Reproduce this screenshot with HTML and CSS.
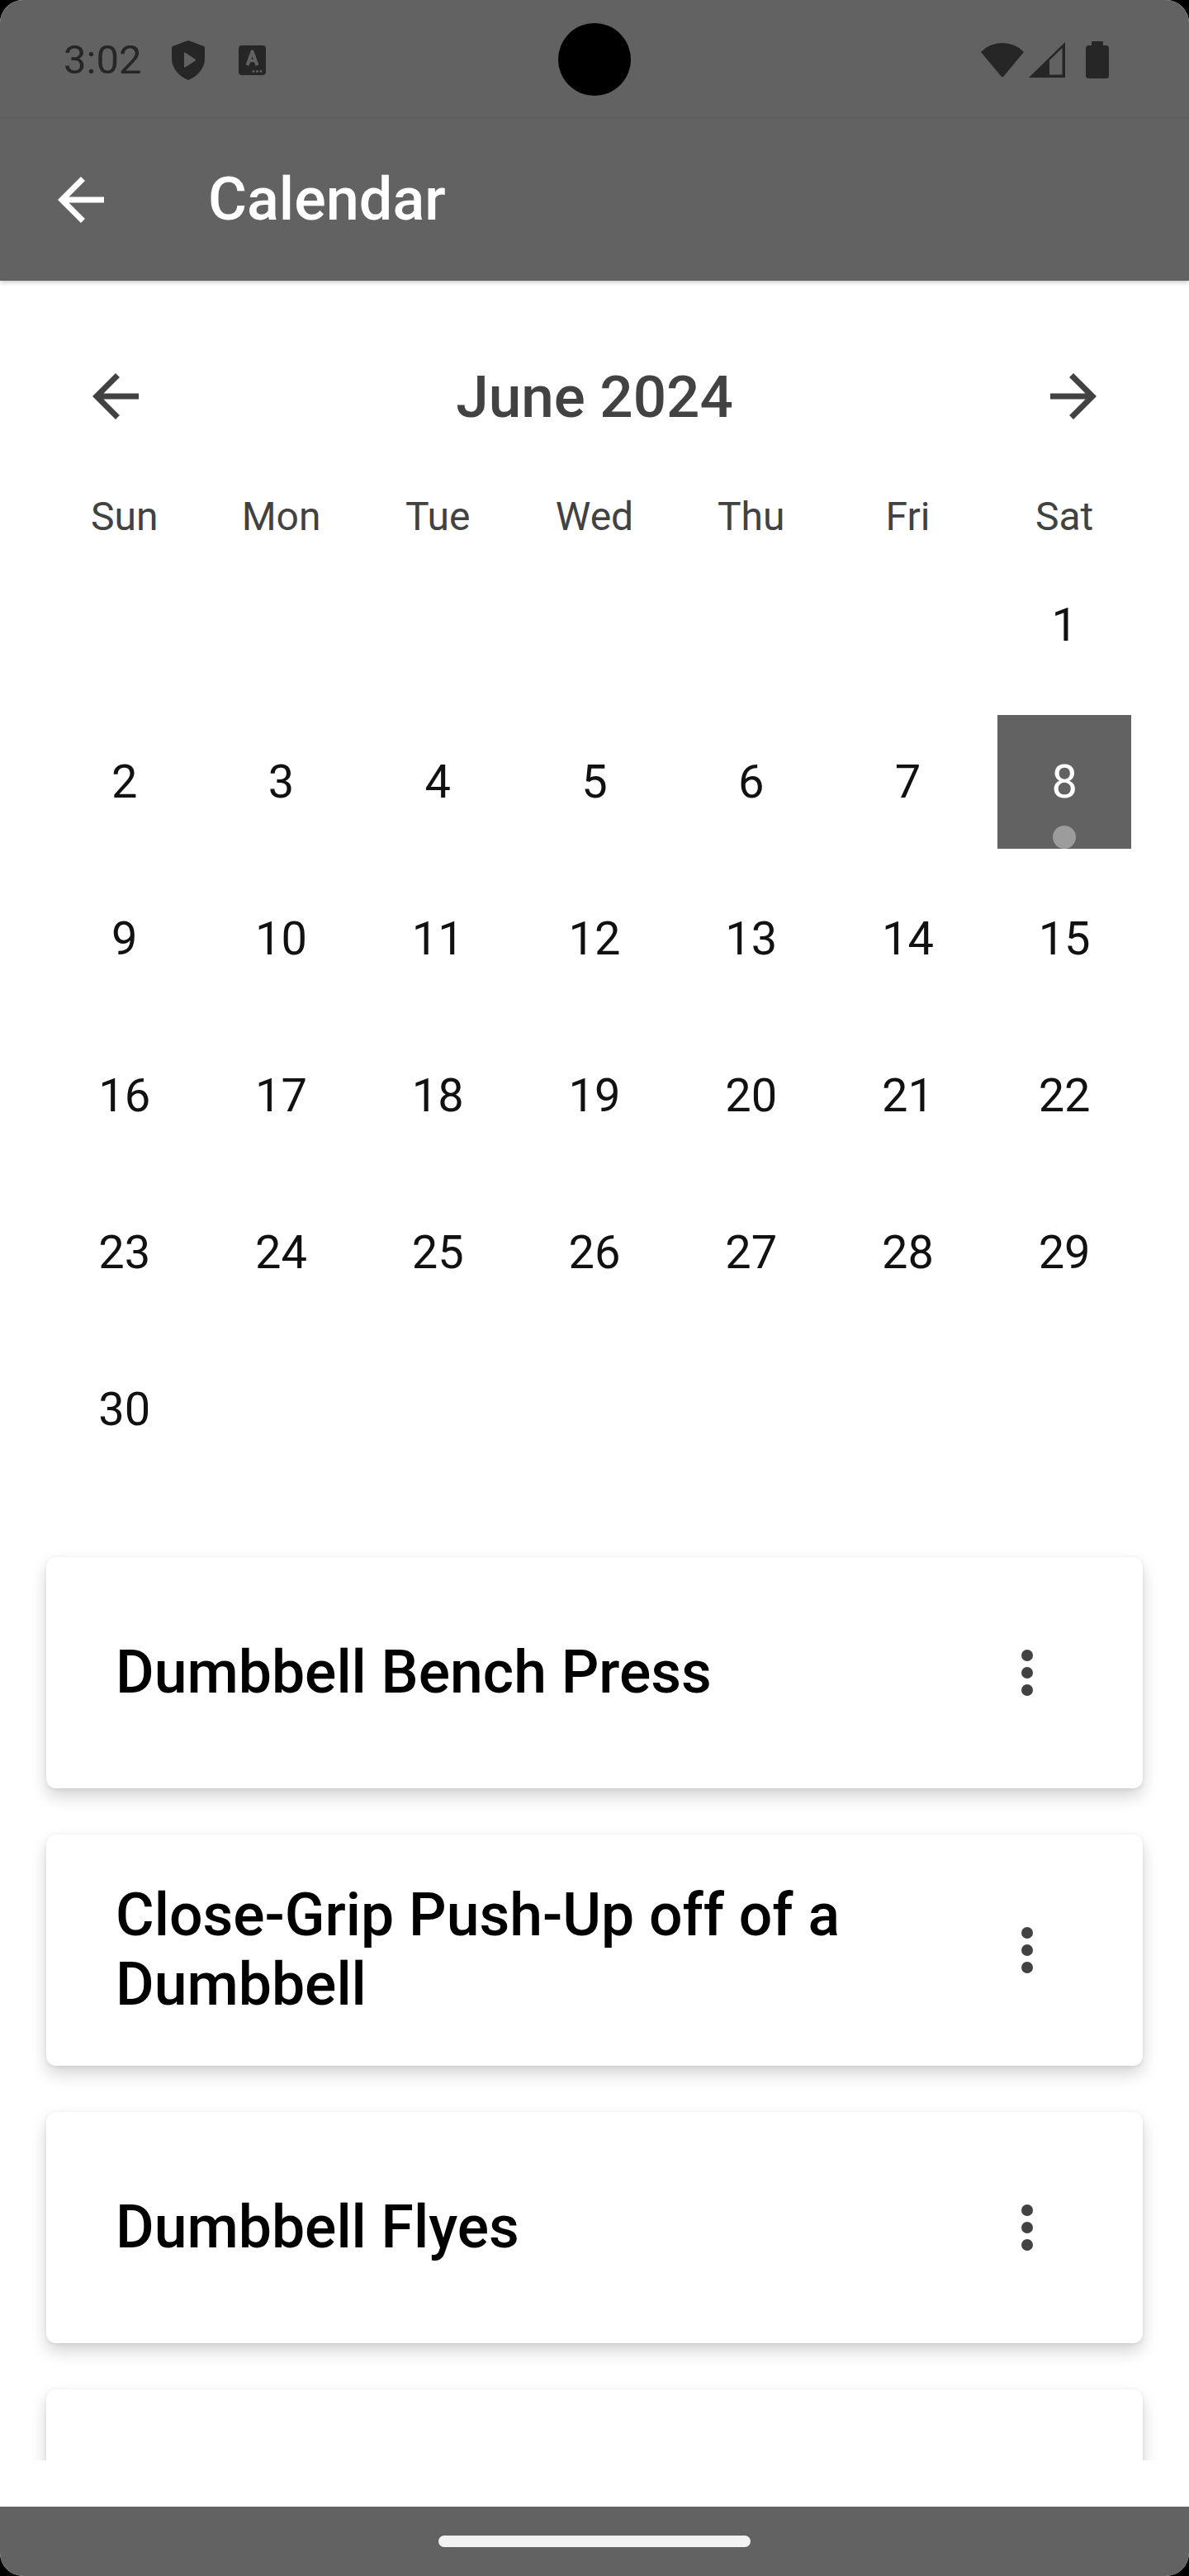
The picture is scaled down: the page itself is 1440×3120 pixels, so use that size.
FILE: index.html
```html
<!DOCTYPE html>
<html lang="en">
<head>
<meta charset="utf-8">
<title>Calendar</title>
<link rel="stylesheet" href="styles.css">
</head>
<body>
<div class="screen">
  <header class="status">
    <span class="time">3:02</span>
    <svg class="shield" viewBox="0 0 40 48"><path d="M20 0 L39 7 Q40 7.4 40 8.5 V22 C40 34 31 43.5 20 48 C9 43.5 0 34 0 22 V8.5 Q0 7.4 1 7 Z" fill="#262626"/><path d="M15 15.5 Q15 14 16.3 14.8 L28.5 22.8 Q29.6 23.6 28.5 24.4 L16.3 32.4 Q15 33.2 15 31.7 Z" fill="#626262"/></svg>
    <svg class="a-icon" viewBox="0 0 33 36"><rect x="0" y="0" width="33" height="36" rx="4" fill="#262626"/><polyline points="10.5,24 16.5,7.5 22.5,24" fill="none" stroke="#626262" stroke-width="4" stroke-linejoin="round"/><line x1="12.5" y1="18.5" x2="20.5" y2="18.5" stroke="#626262" stroke-width="3.5"/><circle cx="18" cy="31.5" r="1.4" fill="#626262"/><circle cx="22.5" cy="31.5" r="1.4" fill="#626262"/><circle cx="27" cy="31.5" r="1.4" fill="#626262"/></svg>
    <span class="spacer"></span>
    <svg class="wifi" viewBox="0 0 54 44"><path d="M1 13 A36 36 0 0 1 53 13 L28.5 42.5 Q27 44 25.5 42.5 Z" fill="#262626"/></svg>
    <svg class="signal" viewBox="0 0 44 43"><path d="M44 0 V43 H0 Z" fill="#262626"/><path d="M25 22 L40.5 7 V39.5 H25 Z" fill="#626262"/></svg>
    <svg class="battery" viewBox="0 0 28 45"><rect x="7" y="0" width="14" height="7" rx="1" fill="#262626"/><rect x="0" y="5" width="28" height="40" rx="3.5" fill="#262626"/></svg>
    <span class="camera"></span>
  </header>

  <div class="appbar">
    <svg class="back" viewBox="0 0 24 24"><path d="M20 11H7.83l5.59-5.59L12 4l-8 8 8 8 1.41-1.41L7.83 13H20v-2z"/></svg>
    <h1 class="appbar-title">Calendar</h1>
  </div>

  <main class="content">
    <section class="calendar">
      <div class="cal-header">
        <svg class="nav-arrow" viewBox="0 0 24 24"><path d="M20 11H7.83l5.59-5.59L12 4l-8 8 8 8 1.41-1.41L7.83 13H20v-2z"/></svg>
        <h2 class="month">June 2024</h2>
        <svg class="nav-arrow" viewBox="0 0 24 24"><path d="M4 11h12.17l-5.59-5.59L12 4l8 8-8 8-1.41-1.41L16.17 13H4v-2z"/></svg>
      </div>
      <div class="weekdays">
        <span>Sun</span><span>Mon</span><span>Tue</span><span>Wed</span><span>Thu</span><span>Fri</span><span>Sat</span>
      </div>
      <div class="days">
        <div class="day first"><span class="num">1</span></div>
        <div class="day"><span class="num">2</span></div>
        <div class="day"><span class="num">3</span></div>
        <div class="day"><span class="num">4</span></div>
        <div class="day"><span class="num">5</span></div>
        <div class="day"><span class="num">6</span></div>
        <div class="day"><span class="num">7</span></div>
        <div class="day"><span class="num selected">8<span class="dot"></span></span></div>
        <div class="day"><span class="num">9</span></div>
        <div class="day"><span class="num">10</span></div>
        <div class="day"><span class="num">11</span></div>
        <div class="day"><span class="num">12</span></div>
        <div class="day"><span class="num">13</span></div>
        <div class="day"><span class="num">14</span></div>
        <div class="day"><span class="num">15</span></div>
        <div class="day"><span class="num">16</span></div>
        <div class="day"><span class="num">17</span></div>
        <div class="day"><span class="num">18</span></div>
        <div class="day"><span class="num">19</span></div>
        <div class="day"><span class="num">20</span></div>
        <div class="day"><span class="num">21</span></div>
        <div class="day"><span class="num">22</span></div>
        <div class="day"><span class="num">23</span></div>
        <div class="day"><span class="num">24</span></div>
        <div class="day"><span class="num">25</span></div>
        <div class="day"><span class="num">26</span></div>
        <div class="day"><span class="num">27</span></div>
        <div class="day"><span class="num">28</span></div>
        <div class="day"><span class="num">29</span></div>
        <div class="day"><span class="num">30</span></div>
      </div>
    </section>

    <section class="list">
      <article class="card">
        <h3 class="card-title">Dumbbell Bench Press</h3>
        <span class="more"><svg viewBox="0 0 24 24"><circle cx="12" cy="6" r="2"/><circle cx="12" cy="12" r="2"/><circle cx="12" cy="18" r="2"/></svg></span>
      </article>
      <article class="card">
        <h3 class="card-title">Close-Grip Push-Up off of a Dumbbell</h3>
        <span class="more"><svg viewBox="0 0 24 24"><circle cx="12" cy="6" r="2"/><circle cx="12" cy="12" r="2"/><circle cx="12" cy="18" r="2"/></svg></span>
      </article>
      <article class="card">
        <h3 class="card-title">Dumbbell Flyes</h3>
        <span class="more"><svg viewBox="0 0 24 24"><circle cx="12" cy="6" r="2"/><circle cx="12" cy="12" r="2"/><circle cx="12" cy="18" r="2"/></svg></span>
      </article>
      <article class="card"></article>
    </section>
  </main>

  <div class="gesture-space"></div>
  <nav class="navbar"><span class="handle"></span></nav>
</div>
</body>
</html>
```

FILE: styles.css
```css
html, body {
  margin: 0;
  padding: 0;
  background: #000;
}

.screen {
  width: 1440px;
  height: 3120px;
  border-radius: 28px;
  overflow: hidden;
  background: #fff;
  display: flex;
  flex-direction: column;
  font-family: Roboto, "Noto Sans", "Liberation Sans", sans-serif;
  position: relative;
}

/* Status bar */
.status {
  flex: 0 0 144px;
  height: 144px;
  box-sizing: border-box;
  background: #626262;
  display: flex;
  align-items: center;
  padding: 0 97px 0 77px;
  position: relative;
}

.time {
  font-size: 49px;
  line-height: 1;
  color: #262626;
  margin-right: 37px;
}

.shield {
  width: 40px;
  height: 48px;
  margin-right: 41px;
  margin-top: 2px;
}

.a-icon {
  width: 33px;
  height: 36px;
  margin-top: 2px;
}

.spacer {
  flex: 1;
}

.wifi {
  width: 54px;
  height: 44px;
  margin-right: 5px;
}

.signal {
  width: 44px;
  height: 43px;
  margin-right: 25px;
}

.battery {
  width: 28px;
  height: 45px;
}

.camera {
  position: absolute;
  left: 676px;
  top: 28px;
  width: 88px;
  height: 88px;
  border-radius: 50%;
  background: #000;
}

/* App bar */
.appbar {
  flex: 0 0 196px;
  height: 196px;
  box-sizing: border-box;
  background: #626262;
  display: flex;
  align-items: center;
  padding-left: 56px;
  box-shadow: 0 2px 5px rgba(0, 0, 0, 0.22);
  position: relative;
  z-index: 1;
}

.back {
  width: 84px;
  height: 84px;
  fill: #fff;
  flex: none;
}

.appbar-title {
  margin: 0 0 0 112px;
  font-size: 72px;
  font-weight: 500;
  line-height: 1;
  color: #fff;
}

/* Content */
.content {
  flex: 1;
  overflow: hidden;
  min-height: 0;
}

.calendar {
  padding: 56px 56px 0;
}

.cal-header {
  height: 168px;
  display: flex;
  align-items: center;
  justify-content: space-between;
  padding: 0 42px;
}

.nav-arrow {
  width: 84px;
  height: 84px;
  fill: #424242;
  flex: none;
}

.month {
  margin: 0;
  font-size: 71px;
  font-weight: 500;
  line-height: 1;
  color: #424242;
}

.weekdays {
  display: grid;
  grid-template-columns: repeat(7, 1fr);
  height: 72px;
  margin-top: 26px;
  line-height: 72px;
  text-align: center;
  font-size: 48px;
  color: #424242;
}

.days {
  display: grid;
  grid-template-columns: repeat(7, 1fr);
  grid-auto-rows: 190px;
}

.day {
  display: flex;
  align-items: center;
  justify-content: center;
}

.day.first {
  grid-column-start: 7;
}

.num {
  width: 162px;
  height: 162px;
  display: flex;
  align-items: center;
  justify-content: center;
  font-size: 56px;
  line-height: 1;
  color: #111;
  position: relative;
}

.num.selected {
  background: #626262;
  color: #fff;
}

.dot {
  position: absolute;
  left: 67px;
  bottom: 0;
  width: 28px;
  height: 28px;
  border-radius: 50%;
  background: #9c9c9c;
}

/* List */
.list {
  padding: 84px 56px 40px;
  display: flex;
  flex-direction: column;
  gap: 56px;
}

.card {
  flex: none;
  height: 280px;
  box-sizing: border-box;
  background: #fff;
  border-radius: 12px;
  box-shadow: 0 10px 20px rgba(0, 0, 0, 0.17), 0 1px 5px rgba(0, 0, 0, 0.08);
  display: flex;
  align-items: center;
  padding: 0 56px 0 84px;
}

.card-title {
  flex: 1;
  margin: 0;
  font-size: 71.5px;
  font-weight: 500;
  line-height: 84px;
  color: #000;
}

.more {
  flex: none;
  width: 168px;
  height: 168px;
  display: flex;
  align-items: center;
  justify-content: center;
}

.more svg {
  width: 84px;
  height: 84px;
  fill: #424242;
}

/* Bottom */
.gesture-space {
  flex: 0 0 56px;
  background: #fff;
}

.navbar {
  flex: 0 0 84px;
  height: 84px;
  background: #626262;
  display: flex;
  align-items: center;
  justify-content: center;
}

.handle {
  width: 378px;
  height: 14px;
  border-radius: 7px;
  background: #f2f2f2;
}
```
